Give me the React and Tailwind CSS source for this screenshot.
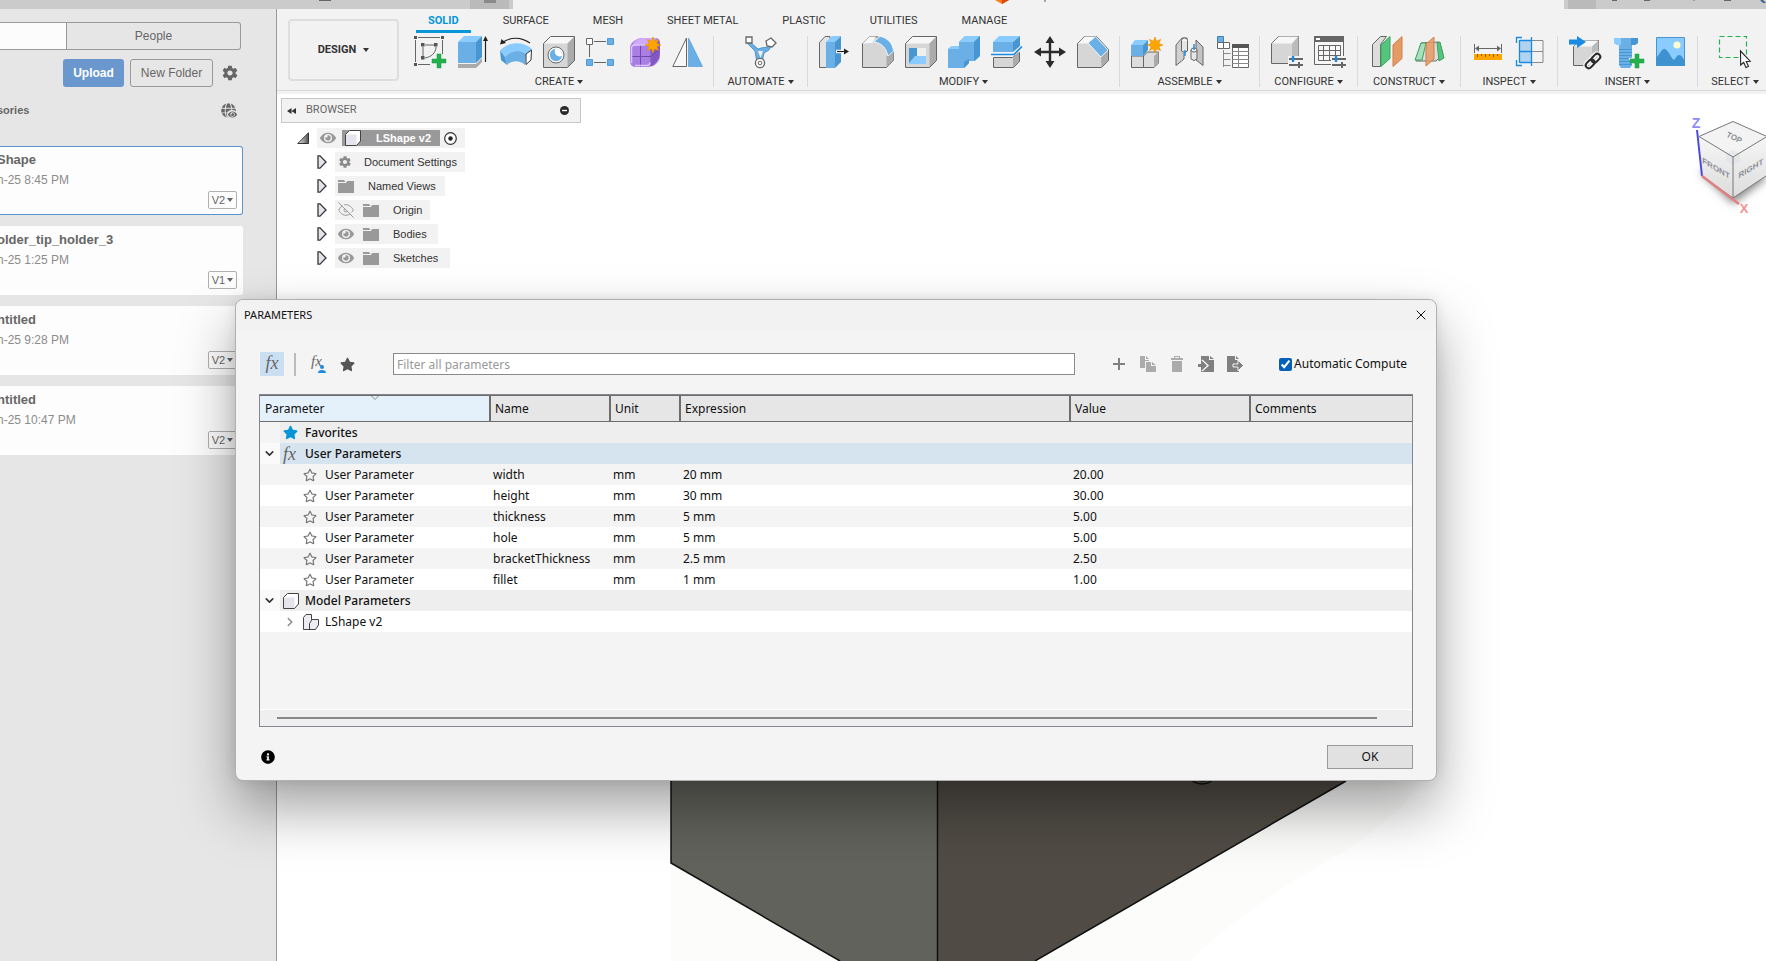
import { FaGlobe, FaInfoCircle, FaRegStar, FaStar, FaEye } from "react-icons/fa";
import { FiEyeOff } from "react-icons/fi";
import { IoMdSettings } from "react-icons/io";
import { LuChevronDown, LuChevronRight, LuX } from "react-icons/lu";

const FACE = "#6aafe6";
const LIGHT = "#8accff";
const DARK = "#4795d1";
const LINE = "#666666";

function Icon({ children, size = 32 }) {
  return (
    <svg width={size} height={size} viewBox="0 0 32 32" fill="none" className="shrink-0 overflow-visible">
      {children}
    </svg>
  );
}

function Caret({ className = "" }) {
  return (
    <svg width="6" height="4" viewBox="0 0 6 4" className={className}>
      <path d="M0 0h6L3 4z" fill="currentColor" />
    </svg>
  );
}

function Plus({ x, y }) {
  return <path transform={`translate(${x} ${y})`} d="M5 0h4v5h5v4h-5v5h-4v-5h-5v-4h5z" fill="#22b14c" stroke="#159a3d" strokeWidth=".5" />;
}

function Burst({ x, y }) {
  return (
    <path
      transform={`translate(${x} ${y})`}
      d="M0-8 1.6-3.8 5.6-5.6 3.8-1.6 8 0 3.8 1.6 5.6 5.6 1.6 3.8 0 8-1.6 3.8-5.6 5.6-3.8 1.6-8 0-3.8-1.6-5.6-5.6-1.6-3.8z"
      fill="#ffa500"
      stroke="#e88f00"
      strokeWidth=".6"
    />
  );
}

function Sliders() {
  return (
    <g>
      <path d="M17 20h15v12H17z" fill="#f2f2f2" />
      <path d="M18 23h14M18 29h14" stroke={LINE} strokeWidth="2" />
      <path d="M22 20v6" stroke="#1a8ae5" strokeWidth="2.4" />
      <path d="M28 26v6" stroke={LINE} strokeWidth="2" />
    </g>
  );
}

// gray block shared by most of the modify tools
function Block() {
  return (
    <g strokeLinejoin="round">
      <path d="M.5 7.500 7.500.5h24v24l-7 7H.5z" fill="#d6d6d6" />
      <path d="M.5 7.500 7.500.5h24l-7 7z" fill="#f7f7f7" />
      <path d="m24.500 7.500 7-7v24l-7 7z" fill="#ababab" />
      <path d="M.5 7.500 7.500.5h24v24l-7 7H.5z" stroke={LINE} />
    </g>
  );
}

const icons = {
  sketch: (
    <Icon>
      <path d="M4 1.500h22M1.500 4v22M4 28.500h12M28.500 4v14" stroke={LINE} />
      <path d="M11 9h9M9 11v9M22 11c0 6-5 10-11 11" stroke={LINE} />
      <path d="M0 0h3v3H0zM27 0h3v3h-3zM0 27h3v3H0zM7 7h3.500v3.500H7zM20 7h3.500v3.500H20zM7 20h3.500v3.500H7z" fill="#555" />
      <Plus x={18} y={18} />
    </Icon>
  ),
  extrude: (
    <Icon>
      <path d="M1 28h18l6-6v4l-6 6H1z" fill="#aaaaaa" />
      <path d="M1 6h18v21H1z" fill={FACE} />
      <path d="M1 6 7 0h18l-6 6z" fill={LIGHT} />
      <path d="m19 6 6-6v21l-6 6z" fill={DARK} />
      <path d="M28.500 26V3" stroke="#222" strokeWidth="1.200" />
      <path d="m26 5 2.500-5L31 5z" fill="#222" />
    </Icon>
  ),
  revolve: (
    <Icon>
      <path d="M3 6c8-5 18-5 27 1" stroke="#222" strokeWidth="1.200" />
      <path d="M0 8.500 1.500 3 6 7z" fill="#222" />
      <path d="M0 14.500C8 5 24 5 32 13l-6 5C20 13 11 14 5 21z" fill={LIGHT} />
      <path d="M0 14.500 5 21l2 8-6-5z" fill={DARK} />
      <path d="M5 21c6-7 15-8 21-3l-1 11c-5-5-13-5-18 0z" fill={FACE} />
      <path d="m26 18 5.500-4-.5 10-5 4.500z" fill="#fff" stroke="#333" />
    </Icon>
  ),
  hole: (
    <Icon>
      <Block />
      <circle cx="13" cy="19" r="8" fill="#fff" stroke={LINE} />
      <circle cx="13" cy="19" r="6.200" fill={FACE} />
      <path d="M12.500 12.800A6.200 6.200 0 0 1 19 20c-5 2-9-3-6.500-7.200z" fill="#fff" />
    </Icon>
  ),
  pattern: (
    <Icon>
      <path d="M8 5.500h12M3.500 9v12M8 26.500h12" stroke={LINE} />
      <path d="M.5 2.500h6v6h-6z" fill="#fff" stroke={LINE} />
      <path d="M21.500 2.500h6v6h-6zM.5 23.500h6v6h-6zM21.500 23.500h6v6h-6z" fill={FACE} stroke="#4f9bd8" />
    </Icon>
  ),
  form: (
    <Icon>
      <path d="M1 12q0-4 4-7 4-3 8-3h13q5 0 5 5v13q0 4-4 8-3 3-7 3H7q-6 0-6-6z" fill="#a97fe6" />
      <path d="M3 10q3-7 10-8h14q-2 7-6 8-7-2-18 0z" fill="#cfa9fb" />
      <path d="M22 11q5-3 8-7 2 8 0 18-4 7-8 8 2-9 0-19z" fill="#8257c4" />
      <path d="M11.500 9v22M2 20.500h20l8-7M22 10v20" stroke="#6d4bab" strokeWidth="1" />
      <path d="M2.500 27V12q0-3 4-3h13M6 29.500h12q3 0 3-3" stroke="#dbc4fb" strokeWidth="1.500" />
      <Burst x={24} y={9} />
    </Icon>
  ),
  mirror: (
    <Icon>
      <path d="M.8 30.500 14.500 2v28.500z" fill="#f8f8f8" stroke={LINE} />
      <path d="M16.500 2v28.500h14z" fill={FACE} stroke="#4795d1" strokeWidth=".6" />
    </Icon>
  ),
  automate: (
    <Icon>
      <path d="m4 5 9 8 3-1 7-1 4-3-3 6-5 3-2 10h-5L10 15 1 6z" fill="#6aafe6" stroke="#3f88bf" strokeWidth=".8" />
      <path d="M13 15h5l-2.500 7z" fill="#f2f2f2" />
      <path d="M1 1h6v6H1z" fill="#fff" stroke={LINE} strokeWidth="1.300" />
      <path d="m26 2 5 5-4 4-5-1-1-5z" fill="#fff" stroke={LINE} strokeWidth="1.300" />
      <circle cx="15" cy="27" r="4.600" fill="#fff" stroke={LINE} strokeWidth="1.300" />
      <circle cx="15" cy="27" r="1.800" stroke={LINE} />
    </Icon>
  ),
  pressPull: (
    <Icon>
      <path d="M.5 6.500 6 .5h5v31H.5z" fill="#e3e3e3" stroke={LINE} />
      <path d="M7 6h9v26H7z" fill={FACE} />
      <path d="m7 6 6-6h9l-6 6z" fill={LIGHT} />
      <path d="m16 6 6-6v26l-6 6z" fill={DARK} />
      <path d="M17 15.500h10" stroke="#fff" strokeWidth="3.500" />
      <path d="M18 15.500h8" stroke="#222" strokeWidth="1.200" />
      <path d="m25 12.500 5 3-5 3z" fill="#222" />
    </Icon>
  ),
  fillet: (
    <Icon>
      <path d="m.5 7.500 7-7h5c10 1 18 8 19 18v6l-7 7H.5z" fill="#d6d6d6" stroke={LINE} />
      <path d="m24.500 20 7-5v9.500l-7 7z" fill="#ababab" />
      <path d="m.5 7.500 7-7h6l-3 6.500z" fill="#f8f8f8" />
      <path d="M12 6 18 .3C26 2 31 8 31.500 15L26 20C24 12 20 7 12 6z" fill={FACE} stroke="#fff" strokeWidth=".8" />
    </Icon>
  ),
  shell: (
    <Icon>
      <Block />
      <path d="M4 12h17v16H4z" fill="#fff" />
      <path d="M4 12h8v9l-8 7z" fill={DARK} />
      <path d="M4 28v-1l6-7h11v8z" fill={LIGHT} />
      <path d="M12 12h9v8h-9z" fill="#efefef" />
    </Icon>
  ),
  combine: (
    <Icon>
      <path d="m0 13 4-3h7V6l6-6h15v20l-5 5h-6v2l-5 5H0z" fill={FACE} />
      <path d="m0 13 4-3h7v3zM11 6l6-6h15l-6 6z" fill={LIGHT} />
      <path d="m26 6 6-6v20l-5 4h-1zM16 26l5-3v4l-5 5z" fill={DARK} />
    </Icon>
  ),
  split: (
    <Icon>
      <path d="M2.500 21.500h19l7-5v9l-6 6h-20z" fill="#d6d6d6" stroke={LINE} />
      <path d="m22 21 6-5v10l-6 5z" fill="#ababab" />
      <path d="M2 6h20v10H2z" fill={FACE} />
      <path d="m2 6 6-6h21l-7 6z" fill={LIGHT} />
      <path d="m22 6 7-6v10l-7 6z" fill={DARK} />
      <path d="M0 18.500h23l8-8" stroke="#1a8ae5" strokeWidth="1.600" />
    </Icon>
  ),
  move: (
    <Icon>
      <path d="M16 5v22M5 16h22" stroke="#2b2b2b" strokeWidth="2.400" />
      <path d="m16 0 4.500 7h-9zM16 32l4.500-7h-9zM0 16l7-4.500v9zM32 16l-7-4.500v9z" fill="#2b2b2b" />
    </Icon>
  ),
  chamfer: (
    <Icon>
      <path d="m.5 7.500 7-7h12l12 13v11l-7 7H.5z" fill="#d6d6d6" stroke={LINE} />
      <path d="m24 21 7-6v9.500l-6.500 6.500z" fill="#ababab" />
      <path d="m1 7.500 7-7h10l-7 7z" fill="#f8f8f8" />
      <path d="m11 7 7.500-6.500L31 14l-7 7z" fill={FACE} stroke="#fff" strokeWidth=".8" />
    </Icon>
  ),
  component: (
    <Icon>
      <path d="M.5 20h12v11.500H.5zM12.500 20l4-4h11v11l-4.500 4.500H12.500z" fill="#dddddd" stroke={LINE} />
      <path d="m23 20 4.500-4v11L23 31z" fill="#ababab" />
      <path d="M0 9h12v11H0z" fill={FACE} />
      <path d="m0 9 4-5h13l-5 5z" fill={LIGHT} />
      <path d="m12 9 5-5v10l-5 6z" fill={DARK} />
      <Burst x={24} y={9} />
    </Icon>
  ),
  joint: (
    <Icon>
      <path d="m2 9 6-7h5v13l-3 2v6l-8 6.500z" fill="#d0d0d0" stroke={LINE} />
      <ellipse cx="10.500" cy="4.500" rx="3" ry="2.500" fill="#f5f5f5" stroke={LINE} />
      <path d="M7.500 5v10q3 3 6 0V5" fill="#e6e6e6" stroke={LINE} />
      <path d="m22 4 7 7v18.500L22 24z" fill="#c4c4c4" stroke={LINE} />
      <path d="M17 14v9q3 3 6 0v-9" fill="#e6e6e6" stroke={LINE} />
      <ellipse cx="20" cy="14" rx="3" ry="2" fill="#f5f5f5" stroke={LINE} />
      <path d="M11 14v6M20 8v6" stroke="#1a8ae5" strokeWidth="1.400" />
    </Icon>
  ),
  bom: (
    <Icon>
      <path d="M.5.5h6v6h-6z" fill={FACE} stroke="#4080b0" />
      <path d="M.5 6.500h6v6h-6zM6.500 6.500h6v6h-6z" fill="#fff" stroke={LINE} />
      <path d="M6.500 14v17M6.500 17.500h7M6.500 23.500h7M6.500 29.500h7" stroke="#888" />
      <path d="M15.500 9.500h16v22h-16z" fill="#fff" stroke={LINE} />
      <path d="M15 8h17v4H15z" fill="#555" />
      <path d="M15 15.500h17M15 19.500h17M15 23.500h17M15 27.500h17M21.500 12v20" stroke="#888" />
    </Icon>
  ),
  configure: (
    <Icon>
      <path d="m.5 7.500 7-7h20v20l-7 7H.5z" fill="#d6d6d6" stroke={LINE} />
      <path d="m1 7.500 7-7h19l-6 7z" fill="#f7f7f7" />
      <path d="m21 7.500 6.500-7v20l-6.500 7z" fill="#bbbbbb" />
      <Sliders />
    </Icon>
  ),
  configTable: (
    <Icon>
      <path d="M.5.5h29v28H.5z" fill="#f7f7f7" stroke={LINE} />
      <path d="M0 0h30v6H0z" fill={LINE} />
      <path d="M2 2h4v2H2z" fill="#fff" />
      <path d="M4.500 9.500h22v15h-22zM4.500 14.500h22M4.500 19.500h22M9.500 9.500v15M15.500 9.500v15M21.500 9.500v15" stroke={LINE} />
      <Sliders />
    </Icon>
  ),
  offsetPlane: (
    <Icon>
      <path d="m.5 8.500 8-8h6l-6 8v22h-8z" fill="#dddddd" stroke={LINE} />
      <path d="m9 9 9-8.500v22L9 30.500z" fill="#55c47c" stroke="#3aa35f" />
      <path d="m21 9 9-8.500v22L21 30.500z" fill="#e69a66" stroke="#cf7f48" />
    </Icon>
  ),
  midPlane: (
    <Icon>
      <path d="m6 7 18-1 4 12-7 7H1z" fill="#dddddd" stroke={LINE} />
      <path d="M6 7h5L7 24H0z" fill="#a8dfbc" stroke="#3aa35f" />
      <path d="m22 7 3-1 4 16-5 3z" fill="#55c47c" stroke="#3aa35f" />
      <path d="m11 8 8-7v22l-8 7z" fill="#e69a66" fillOpacity=".85" stroke="#cf7f48" />
    </Icon>
  ),
  measure: (
    <Icon>
      <path d="M2.500 8v9M29.500 8v9M4 12.500h24" stroke={LINE} />
      <path d="m3 12.500 4-3v6zM29 12.500l-4-3v6z" fill={LINE} />
      <path d="M2 18h28v6H2z" fill="#ffa500" />
      <path d="M5.500 18v3M9.500 18v2M13.500 18v3M17.500 18v2M21.500 18v3M25.500 18v2" stroke="#8a5a00" />
    </Icon>
  ),
  section: (
    <Icon>
      <path d="M5 4h11v22H5z" fill="#b0d4f0" />
      <path d="M16 4.500h12v22H16M16 15.500h12" stroke="#8a8a8a" />
      <path d="M5 4.500h11M5 15.500h11M5 26.500h11M4.500 4v23M16.500 1v29M7 1.500H1.500V7M1.500 24v5.500H7" stroke="#1a8ae5" strokeWidth="1.300" />
    </Icon>
  ),
  derive: (
    <Icon>
      <path d="m4.500 10.500 7-6h18v19l-7 6h-18z" fill="#d6d6d6" stroke={LINE} />
      <path d="m5 10.500 7-6h17l-6 6z" fill="#f7f7f7" />
      <path d="m23 10.500 6.500-6v19l-6.500 6z" fill="#bbb" />
      <path d="M0 3.500h8V0l9 6-9 6V8.500H0z" fill="#1a8ae5" />
      <g transform="rotate(-45 24 25)" stroke="#f2f2f2" strokeWidth="5">
        <rect x="15" y="22" width="10" height="6" rx="3" />
        <rect x="23" y="22" width="10" height="6" rx="3" />
      </g>
      <g transform="rotate(-45 24 25)" stroke="#2b2b2b" strokeWidth="2">
        <rect x="15" y="22" width="10" height="6" rx="3" />
        <rect x="23" y="22" width="10" height="6" rx="3" />
      </g>
    </Icon>
  ),
  fastener: (
    <Icon>
      <path d="M2 2h24v5l-3 2H5L2 7z" fill={FACE} />
      <path d="M2 2h7v7H5L2 7z" fill={LIGHT} />
      <path d="M19 2h7v5l-3 2h-4z" fill={DARK} />
      <path d="M7 9h13v20l-2 3H9l-2-3z" fill={FACE} />
      <path d="M7 13.500h13M7 16.500h13M7 19.500h13M7 22.500h13M7 25.500h13M7 28.500h13" stroke={DARK} />
      <path d="M17 23h5v-5h5v5" stroke="#f2f2f2" strokeWidth="2" />
      <Plus x={18} y={18} />
    </Icon>
  ),
  canvas: (
    <Icon>
      <path d="M1.500 1.500h28v28h-28z" fill={LIGHT} stroke="#4795d1" />
      <path d="M1 22c5-5 6-10 9-9 4 2 6 9 9 11 2-2 3-5 5-5 3 0 3 3 6 5v6H1z" fill="#3e92d0" />
      <circle cx="22" cy="9" r="3.500" fill="#ffffcf" />
    </Icon>
  ),
  select: (
    <Icon>
      <path d="M.5.5h27v21H.5z" stroke="#22b14c" strokeDasharray="5 3" strokeWidth="1.200" />
      <path d="m21.500 15 .2 14 3-2.500 2.300 5 2.500-1.200-2.300-4.800 4-.3z" fill="#fff" stroke="#222" strokeWidth="1.100" />
    </Icon>
  ),
};

const groups = [
  { label: "CREATE", width: "min-w-[309px]", tools: ["sketch", "extrude", "revolve", "hole", "pattern", "form", "mirror"] },
  { label: "AUTOMATE", width: "min-w-[94px]", tools: ["automate"] },
  { label: "MODIFY", width: "min-w-[312px]", tools: ["pressPull", "fillet", "shell", "combine", "split", "move", "chamfer"] },
  { label: "ASSEMBLE", width: "min-w-[140px]", tools: ["component", "joint", "bom"] },
  { label: "CONFIGURE", width: "min-w-[98px]", tools: ["configure", "configTable"] },
  { label: "CONSTRUCT", width: "min-w-[103px]", tools: ["offsetPlane", "midPlane"] },
  { label: "INSPECT", width: "min-w-[97px]", tools: ["measure", "section"] },
  { label: "INSERT", width: "min-w-[140px]", tools: ["derive", "fastener", "canvas"] },
  { label: "SELECT", width: "min-w-[74px]", tools: ["select"] },
];

const tabs = ["SOLID", "SURFACE", "MESH", "SHEET METAL", "PLASTIC", "UTILITIES", "MANAGE"];

const files = [
  { name: "Shape", date: "n-25 8:45 PM", version: "V2", active: true },
  { name: "older_tip_holder_3", date: "n-25 1:25 PM", version: "V1" },
  { name: "ntitled", date: "n-25 9:28 PM", version: "V2" },
  { name: "ntitled", date: "n-25 10:47 PM", version: "V2" },
];

const params = [
  ["width", "mm", "20 mm", "20.00"],
  ["height", "mm", "30 mm", "30.00"],
  ["thickness", "mm", "5 mm", "5.00"],
  ["hole", "mm", "5 mm", "5.00"],
  ["bracketThickness", "mm", "2.5 mm", "2.50"],
  ["fillet", "mm", "1 mm", "1.00"],
];

function TopStrip() {
  return (
    <header className="flex h-[9px] shrink-0 bg-[#f2f2f2]">
      <div className="flex w-[513px] justify-end bg-[#cbcbcb] pr-1">
        <span className="mr-[139px] h-px w-3 bg-[#666]" />
        <span className="flex w-[39px] justify-center bg-[#bababa]">
          <span className="h-[3px] w-3 bg-[#8a8a8a]" />
        </span>
      </div>
      <div className="flex flex-1 justify-center">
        <svg width="100" height="4" viewBox="0 0 100 4">
          <path d="M6 0h14l-7 4z" fill="#ff7a1a" />
          <path d="M13 0h7l-7 4z" fill="#d9480f" />
          <path d="M56 0v2" stroke="#555" />
        </svg>
      </div>
      <div className="flex w-[202px] bg-[#cbcbcb] pl-1">
        <span className="w-7 bg-[#bababa]" />
        <svg width="170" height="3" viewBox="0 0 170 3" stroke="#666" fill="none">
          <path d="M16 .5h5M48 .5h6M98 0v1M128 .5h7" />
          <path d="M165 0l4 3" stroke="#3a5f8a" strokeWidth="2" />
        </svg>
      </div>
    </header>
  );
}

function DataPanel() {
  return (
    <aside className="w-[277px] shrink-0 overflow-hidden border-r border-[#999] bg-[#e6e6e6] pt-[13px] text-xs text-[#666]">
      <div className="mr-[35px] flex h-7 rounded-r-[3px] border border-l-0 border-[#999]">
        <button className="w-[66px] bg-[#fcfcfc]" aria-label="Data" />
        <button className="flex-1 border-l border-[#999]">People</button>
      </div>
      <div className="mt-[9px] mr-[37px] flex items-center justify-end">
        <button className="h-7 w-[61px] rounded-[3px] bg-[#6a98ce] font-bold text-white">Upload</button>
        <button className="ml-[6px] h-7 w-[83px] rounded-[3px] border border-[#999]">New Folder</button>
        <button className="ml-2" aria-label="Settings">
          <IoMdSettings size={18} />
        </button>
      </div>
      <div className="mt-[15px] mr-10 -ml-[3px] flex h-4 items-center justify-between">
        <span className="text-[11px] font-bold">sories</span>
        <span className="relative">
          <FaGlobe size={15} />
          <span className="absolute -right-px -bottom-px rounded-full bg-[#e6e6e6] pl-px">
            <FaEye size={9} />
          </span>
        </span>
      </div>
      <ul className="mt-7 mr-[33px] flex flex-col gap-[11px]">
        {files.map((file, i) => (
          <li
            key={i}
            className={`flex h-[69px] flex-col rounded-r-[3px] border border-l-0 bg-[#fdfdfd] ${
              file.active ? "border-[#5b93cf]" : "border-[#fdfdfd]"
            }`}
          >
            <p className="-ml-[3px] pt-[5px] text-[13px] leading-4 font-bold">{file.name}</p>
            <p className="-ml-[3px] pt-1 leading-4 text-[#8c8c8c]">{file.date}</p>
            <button className="mt-[3px] mr-[5px] flex h-[18px] w-[29px] items-center justify-center gap-[2px] self-end rounded-[2px] border border-[#b0b0b0] text-[11px]">
              {file.version}
              <Caret />
            </button>
          </li>
        ))}
      </ul>
    </aside>
  );
}

function Ribbon() {
  return (
    <div className="h-[85px] shrink-0 bg-[#f2f2f2] font-[Roboto,sans-serif] text-[11px] text-[#333]">
      <div className="flex h-[82px] overflow-hidden border-b border-[#d9d9d9]">
        <button className="mt-[10px] ml-[11px] flex h-[62px] w-[111px] shrink-0 items-center justify-center gap-[7px] rounded-[4px] border-2 border-[#dedede] font-bold">
          DESIGN
          <Caret />
        </button>
        <div className="ml-[6px] shrink-0">
          <nav className="flex h-6 gap-5 pl-[11px] leading-[24px]">
            {tabs.map((tab, i) => (
              <a
                key={tab}
                href="#"
                className={i === 0 ? "border-b-3 border-[#0696d7] px-3 font-bold text-[#0696d7]" : "px-3"}
              >
                {tab}
              </a>
            ))}
          </nav>
          <div className="mt-[3px] flex h-[51px]">
            {groups.map((group) => (
              <div
                key={group.label}
                className={`flex flex-col items-center border-r border-[#dadada] last:border-0 ${group.width}`}
              >
                <div className="flex gap-[11px]">
                  {group.tools.map((tool) => (
                    <button key={tool} aria-label={tool}>
                      {icons[tool]}
                    </button>
                  ))}
                </div>
                <button className="mt-[7px] flex items-center gap-[3px] leading-[14px]">
                  {group.label}
                  <Caret />
                </button>
              </div>
            ))}
          </div>
        </div>
      </div>
    </div>
  );
}

function Folder() {
  return (
    <svg width="16" height="13" viewBox="0 0 16 13" fill="#999" className="shrink-0">
      <path d="M0 0h6l1.500 2H0zM0 3h8l1-2h7v12H0z" />
    </svg>
  );
}

function Box({ size = 16 }) {
  return (
    <svg width={size} height={size} viewBox="0 0 16 16" className="shrink-0" strokeLinejoin="round">
      <path d="m.5 4.500 4-4h11v10l-4 5H.5z" fill="#e4e4ec" />
      <path d="m.5 4.500 4-4h11l-4 4z" fill="#fff" />
      <path d="m11.500 4.500 4-4v10l-4 5z" fill="#fff" />
      <path d="M.5 4.500l4-4h11v10.500l-4 4.500H.5z" fill="none" stroke="#444" />
    </svg>
  );
}

function TreeRow({ icon, label, width }) {
  return (
    <li className="flex h-5 items-center">
      <svg width="10" height="14" viewBox="0 0 10 14" className="mr-2 shrink-0">
        <path d="M1 .8H3L9 7 3 13.200H1z" fill="#e4e4ec" stroke="#333" strokeWidth="1.300" />
      </svg>
      <span className={`flex h-5 items-center bg-[#f2f2f2] pl-[3px] ${width}`}>
        {icon}
        {label}
      </span>
    </li>
  );
}

function Browser() {
  return (
    <section className="w-[300px] pt-1 text-[11px] text-[#333]">
      <div className="flex h-[25px] items-center border border-[#c8c8c8] bg-[#f2f2f2] px-[5px] font-[Roboto,sans-serif] text-[#666]">
        <svg width="9" height="6" viewBox="0 0 9 6" fill="#333">
          <path d="M4.500 0v6L0 3zM9 0v6L4.500 3z" />
        </svg>
        <span className="ml-[10px] flex-1">BROWSER</span>
        <svg width="9" height="9" viewBox="0 0 9 9" className="mr-[6px]">
          <circle cx="4.500" cy="4.500" r="4.500" fill="#2b2b2b" />
          <path d="M2 4.500h5" stroke="#fff" strokeWidth="1.400" />
        </svg>
      </div>
      <div className="mt-[5px] ml-4 flex h-5 items-center">
        <svg width="12" height="12" viewBox="0 0 12 12" className="mr-2">
          <defs>
            <linearGradient id="expander">
              <stop stopColor="#eee" />
              <stop offset="1" stopColor="#555" />
            </linearGradient>
          </defs>
          <path d="M11.500.8v10.700H.8z" fill="url(#expander)" stroke="#333" />
        </svg>
        <div className="flex h-5 w-[148px] items-center bg-[#f2f2f2] pl-[3px]">
          <FaEye size={16} color="#999" />
          <span className="ml-[6px] flex h-4 w-[98px] items-center bg-[#999] pl-[3px] font-bold text-white">
            <Box />
            <span className="ml-[15px]">LShape v2</span>
          </span>
          <svg width="13" height="13" viewBox="0 0 13 13" className="ml-1">
            <circle cx="6.500" cy="6.500" r="5.800" fill="#fff" stroke="#333" strokeWidth="1.200" />
            <circle cx="6.500" cy="6.500" r="2.200" fill="#222" />
          </svg>
        </div>
      </div>
      <ul className="mt-1 ml-9 flex flex-col gap-1">
        <TreeRow width="w-[130px] gap-3" icon={<IoMdSettings size={14} color="#8a8a8a" />} label="Document Settings" />
        <TreeRow width="w-[110px] gap-[14px]" icon={<Folder />} label="Named Views" />
        <TreeRow
          width="w-[95px] gap-[14px]"
          icon={
            <span className="flex items-center gap-[9px]">
              <FiEyeOff size={16} color="#999" strokeWidth={1.5} />
              <Folder />
            </span>
          }
          label="Origin"
        />
        {["Bodies", "Sketches"].map((name) => (
          <TreeRow
            key={name}
            width={name === "Bodies" ? "w-[103px] gap-[14px]" : "w-[115px] gap-[14px]"}
            icon={
              <span className="flex items-center gap-[9px]">
                <FaEye size={16} color="#999" />
                <Folder />
              </span>
            }
            label={name}
          />
        ))}
      </ul>
    </section>
  );
}

function ViewCube() {
  return (
    <svg width="76" height="104" viewBox="1690 114 76 104" className="absolute top-[20px] right-0 overflow-hidden">
      <defs>
        <filter id="soft" x="-30%" y="-30%" width="160%" height="160%">
          <feGaussianBlur stdDeviation="4" />
        </filter>
        <linearGradient id="face" x2="0" y2="1">
          <stop stopColor="#f6f6f6" />
          <stop offset="1" stopColor="#dcdcdc" />
        </linearGradient>
      </defs>
      <path d="M1700 172l33 32 34-26-20-20z" fill="#888" filter="url(#soft)" />
      <path d="M1733 121.500 1699 136.500l34 20.500 34-20.500z" fill="#f3f3f3" />
      <path d="M1699 136.500l34 20.500v41l-31-22z" fill="url(#face)" />
      <path d="M1767 136.500 1733 157v41l33-22z" fill="url(#face)" />
      <path d="m1733 150 7 4v7l-7 4-7-4v-7z" fill="#d9dde3" opacity=".5" />
      <path
        d="M1733 121.500 1699 136.500l34 20.500 34-20.500zM1733 157v41M1702 176l31 22 33-22"
        fill="none"
        stroke="#777"
      />
      <path d="m1697 130 5 46" stroke="#4b4bdc" strokeWidth="2" />
      <path d="m1702 176 37 28" stroke="#e08080" strokeWidth="2.500" />
      <g fontFamily="Liberation Sans, sans-serif" fill="#8d9096" fontWeight="bold" textAnchor="middle">
        <text x="1696" y="128" fontSize="14" fill="#8c8cf5">Z</text>
        <text x="1744" y="213" fontSize="13" fill="#f59090">X</text>
        <text transform="translate(1733 140) rotate(26)" fontSize="8">TOP</text>
        <text transform="translate(1716 171) skewY(31)" fontSize="8">FRONT</text>
        <text transform="translate(1751 171) skewY(-31)" fontSize="8">RIGHT</text>
      </g>
    </svg>
  );
}

function Model() {
  return (
    <svg width="760" height="220" viewBox="665 741 760 220" className="absolute bottom-0 left-[388px]">
      <path d="M671 863 840 961H671zM1345 781h75q-20 40-110 90-80 50-120 90H1034z" fill="#fcfcfb" />
      <path d="M671 741v122l169 98h98V741z" fill="#62625c" />
      <path d="M938 741v220h97l311-180 60-40z" fill="#504c45" />
      <path d="M671 741v122l169 98M937.500 741v220M1035 961l311-180" fill="none" stroke="#111" strokeWidth="1.500" />
      <path d="M1190 779q12 10 24 0M1197 779q5 4 12 0" fill="none" stroke="#111" strokeWidth="1.500" />
    </svg>
  );
}

function FxIcon({ small, children }) {
  return (
    <span
      className={`font-['Liberation_Serif',serif] text-[#666] italic ${
        small ? "relative text-[15px] leading-4" : "text-lg leading-5"
      }`}
    >
      fx
      {children}
    </span>
  );
}

function Toolbar() {
  return (
    <div className="mx-6 mt-[22px] flex h-6 items-center text-[#808080]">
      <button className="flex size-6 items-center justify-center bg-[#cbdff2] pb-[3px]">
        <FxIcon />
      </button>
      <span className="ml-[10px] h-[23px] w-[2px] bg-[#bbb]" />
      <button className="ml-[15px] w-4 pb-[5px] text-left">
        <FxIcon small>
          <svg width="8" height="8" viewBox="0 0 8 8" className="absolute -right-1 -bottom-1">
            <circle cx="4" cy="2" r="2" fill="#1a8ae5" />
            <path d="M0 8q0-3 4-3t4 3z" fill="#1a8ae5" />
          </svg>
        </FxIcon>
      </button>
      <button className="ml-[13px] text-[#555]" aria-label="Show favorites">
        <FaStar size={15} />
      </button>
      <input
        aria-label="Filter all parameters"
        placeholder="Filter all parameters"
        className="ml-[38px] h-[22px] min-w-0 flex-1 border border-[#8a8a8a] bg-white px-[3px] placeholder:text-[#999]"
      />
      <div className="ml-9 flex items-center gap-[13px]">
        <button aria-label="Add">
          <svg width="16" height="16" viewBox="0 0 16 16">
            <path d="M8 2v12M2 8h12" stroke="#808080" strokeWidth="2" />
          </svg>
        </button>
        <button aria-label="Copy">
          <svg width="16" height="16" viewBox="0 0 16 16" fill="#ababab">
            <path d="M0 0h5v4h4v1H5v7H0zM6 0l3 3H6zM6 6h5v4h5v6H6zM12 6l4 3h-4z" />
          </svg>
        </button>
        <button aria-label="Delete">
          <svg width="16" height="16" viewBox="0 0 16 16" fill="#ababab">
            <path d="M2 2h3V0h6v2h3v2H2zM6 1v1h4V1zM3 5h10v11H3z" fillRule="evenodd" />
          </svg>
        </button>
        <button aria-label="Import">
          <svg width="16" height="16" viewBox="0 0 16 16" fill="#808080">
            <path d="M3 0h8v4h5v12H3zM12 0l4 3h-4z" />
            <path d="M4 4l6 5.500L4 15" fill="none" stroke="#f4f4f4" strokeWidth="1.500" />
            <path d="M0 8h4V5l4.500 4.500L4 14v-3H0z" />
          </svg>
        </button>
        <button aria-label="Export">
          <svg width="16" height="16" viewBox="0 0 16 16" fill="#808080">
            <path d="M0 0h8v4h4v12H0zM9 0l3 3H9z" />
            <path d="M6 8h5V4l5.500 5.500L11 15v-4H6z" stroke="#f4f4f4" />
          </svg>
        </button>
      </div>
      <label className="ml-9 flex items-center gap-[2px] pr-[5px] text-[#111]">
        <input
          type="checkbox"
          defaultChecked
          className="size-[13px] accent-[#0560b9]"
        />
        Automatic Compute
      </label>
    </div>
  );
}

function Section({ icon, label, open, tone }) {
  return (
    <tr>
      <td colSpan={6} className="h-[21px] p-0">
        <div className="flex h-[21px]">
          <span className={`flex w-5 items-center justify-center pr-[2px] ${open ? "bg-[#fafafa]" : "bg-[#f4f4f4]"}`}>
            {open && <LuChevronDown size={13} strokeWidth={3} color="#333" />}
          </span>
          <span className={`flex flex-1 items-center pl-[3px] font-medium ${tone}`}>
            <span className="w-[22px]">{icon}</span>
            {label}
          </span>
        </div>
      </td>
    </tr>
  );
}

function ParameterTable() {
  const th = "h-[27px] border-t border-r-2 border-b border-[#6d6d6d] bg-[#e6e6e6] py-0 pl-1 text-left font-normal last:border-r-0";
  return (
    <div className="mx-[23px] mt-[18px] flex flex-1 flex-col border border-[#85858f]">
      <table className="w-full table-fixed border-separate border-spacing-0">
        <colgroup>
          <col className="w-[231px]" />
          <col className="w-[120px]" />
          <col className="w-[70px]" />
          <col className="w-[390px]" />
          <col className="w-[180px]" />
          <col />
        </colgroup>
        <thead>
          <tr>
            <th className="relative h-[27px] border-t border-r-2 border-b border-[#6d6d6d] bg-[#e4f1fb] py-0 pl-[5px] text-left font-normal">
              Parameter
              <svg width="8" height="4" viewBox="0 0 8 4" className="absolute inset-x-0 top-0 mx-auto">
                <path d="M.5 0 4 3.500 7.500 0" fill="none" stroke="#888" />
              </svg>
            </th>
            <th className={th}>Name</th>
            <th className={th}>Unit</th>
            <th className={th}>Expression</th>
            <th className={th}>Value</th>
            <th className={th}>Comments</th>
          </tr>
        </thead>
        <tbody>
          <Section label="Favorites" tone="bg-[#eeeeee]" icon={<FaStar size={15} color="#0696d7" />} />
          <Section label="User Parameters" open tone="bg-[#d6e4ef]" icon={<FxIcon />} />
          {params.map(([name, unit, expression, value]) => (
            <tr key={name} className="odd:bg-[#f4f4f4] even:bg-white">
              <td className="h-[21px] p-0">
                <span className="flex items-center pl-[43px]">
                  <FaRegStar size={14} color="#777" className="mr-2" />
                  User Parameter
                </span>
              </td>
              <td className="p-0 pl-[2px]">{name}</td>
              <td className="p-0 pl-[2px]">{unit}</td>
              <td className="p-0 pl-[2px]">{expression}</td>
              <td className="p-0 pl-[2px]">{value}</td>
              <td />
            </tr>
          ))}
          <Section label="Model Parameters" open tone="bg-[#eeeeee]" icon={<Box />} />
          <tr className="bg-white">
            <td colSpan={6} className="h-[21px] p-0">
              <span className="flex items-center pl-[23px]">
                <LuChevronRight size={14} strokeWidth={2.5} color="#888" className="mr-[6px]" />
                <svg width="16" height="16" viewBox="0 0 16 16" className="mr-[6px]" strokeLinejoin="round">
                  <path d="M.5 3.500 3 .5h5.500v5L11 5.500h4.500V11l-3 4.500H.5z" fill="#ececf2" stroke="#444" />
                  <path d="M6.500 15V9.500L9 5.500" fill="none" stroke="#444" />
                </svg>
                LShape v2
              </span>
            </td>
          </tr>
        </tbody>
      </table>
      <div className="mt-auto flex h-[17px] items-center border-t border-white bg-[#efefef] pr-[35px] pl-[17px]">
        <span className="h-[2px] w-full bg-[#888]" />
      </div>
    </div>
  );
}

function ParametersDialog() {
  return (
    <div
      role="dialog"
      aria-label="Parameters"
      className="absolute top-[299px] right-[329px] left-[235px] flex h-[482px] flex-col rounded-lg border border-[#b0b0b0] bg-[#f4f4f4] font-['Noto_Sans',sans-serif] text-xs text-[#111] shadow-[0_28px_56px_rgba(0,0,0,0.36),0_0_14px_rgba(0,0,0,0.1)]"
    >
      <div className="flex h-[30px] shrink-0 items-center justify-between rounded-t-lg bg-[#f2f2f2] pr-[7px] pl-2">
        <h2 className="text-[11px]">PARAMETERS</h2>
        <button aria-label="Close">
          <LuX size={16} strokeWidth={1.5} />
        </button>
      </div>
      <Toolbar />
      <ParameterTable />
      <div className="mx-[23px] mt-[18px] mb-[11px] flex h-6 items-center justify-between">
        <FaInfoCircle size={14} color="#000" className="ml-[2px]" />
        <button className="h-6 w-[86px] border border-[#999] bg-[#e1e1e1]">OK</button>
      </div>
    </div>
  );
}

export default function App() {
  return (
    <div className="relative flex h-screen w-full flex-col overflow-hidden bg-white font-['Liberation_Sans',Arial,sans-serif]">
      <TopStrip />
      <div className="flex min-h-0 flex-1">
        <DataPanel />
        <main className="relative flex min-w-0 flex-1 flex-col overflow-hidden">
          <Ribbon />
          <div className="relative flex-1 pl-1">
            <Browser />
            <ViewCube />
            <Model />
          </div>
        </main>
      </div>
      <ParametersDialog />
    </div>
  );
}
